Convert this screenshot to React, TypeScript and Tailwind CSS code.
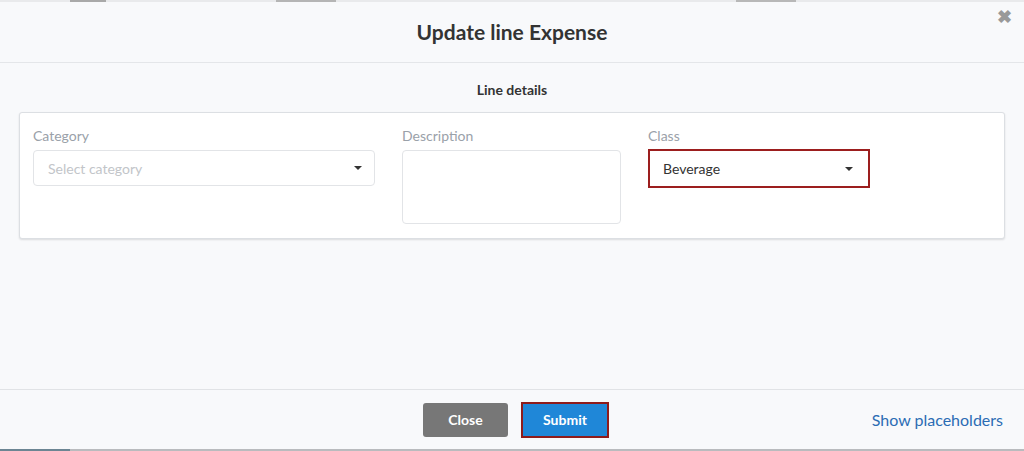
import React from 'react';

const Caret: React.FC = () => (
  <svg width="8" height="4" viewBox="0 0 8 4" className="shrink-0">
    <path d="M0 0h8L4 4z" fill="#333" />
  </svg>
);

const Field: React.FC<{ label: string; children: React.ReactNode; className?: string }> = ({ label, children, className }) => (
  <div className={`flex flex-col ${className ?? ''}`}>
    <label className="text-[14px] leading-[20px] text-[#9aa1a9] mb-[4px]">{label}</label>
    {children}
  </div>
);

export default function App() {
  return (
    <div className="w-[1024px] h-[451px] flex flex-col bg-[#f8f9fb] overflow-hidden" style={{ fontFamily: 'Lato, "Open Sans", sans-serif' }}>
      {/* backdrop peeking above */}
      <div className="h-[2px] flex bg-[#e9eaec]">
        <div className="w-[70px]" />
        <div className="w-[36px] bg-[#a9a9a9]" />
        <div className="w-[170px]" />
        <div className="w-[60px] bg-[#b5b5b5]" />
        <div className="w-[400px]" />
        <div className="w-[60px] bg-[#b8b8b8]" />
      </div>

      {/* header */}
      <div className="relative h-[61px] flex items-center justify-center border-b border-[#e4e6e9]">
        <h2 className="text-[21px] font-bold text-[#333]">Update line Expense</h2>
        <span className="absolute right-[12px] top-[5px] text-[#999] text-[18px] font-bold leading-none">✖</span>
      </div>

      {/* body */}
      <div className="flex-1 px-[19px] pt-[17px]">
        <div className="text-center text-[14px] font-bold text-[#333] leading-[20px]">Line details</div>
        <div className="mt-[12px] bg-white border border-[#dcdfe3] rounded-[3px] shadow-[0_1px_2px_rgba(0,0,0,0.12)] h-[127px] px-[13px] pt-[13px] flex gap-[27px]">
          <Field label="Category" className="w-[342px]">
            <div className="h-[36px] border border-[#e2e4e7] rounded-[4px] flex items-center justify-between pl-[14px] pr-[12px]">
              <span className="text-[14px] text-[#c2c5c9]">Select category</span>
              <Caret />
            </div>
          </Field>
          <Field label="Description" className="w-[219px]">
            <div className="h-[74px] border border-[#e2e4e7] rounded-[4px]" />
          </Field>
          <Field label="Class" className="w-[222px]">
            <div className="h-[39px] -mt-[1px] border-2 border-[#9c1e1e] flex items-center justify-between pl-[13px] pr-[15px]">
              <span className="text-[14px] text-[#333]">Beverage</span>
              <Caret />
            </div>
          </Field>
        </div>
      </div>

      {/* footer */}
      <div className="relative h-[60px] border-t border-[#e1e3e6] flex items-center justify-center gap-[13px] pl-[8px]">
        <button className="w-[85px] h-[34px] rounded-[3px] bg-[#777] text-white text-[14px] font-bold">Close</button>
        <button className="w-[88px] h-[36px] bg-[#1f87d8] border-2 border-[#8e1b1b] text-white text-[14px] font-bold">Submit</button>
        <span className="absolute right-[21px] top-[20px] text-[16px] text-[#2b6cb4] leading-[20px]">Show placeholders</span>
      </div>

      {/* backdrop peeking below */}
      <div className="h-[2px] flex bg-[#b9bbbe]">
        <div className="w-[70px] bg-[#6c8593]" />
      </div>
    </div>
  );
}
